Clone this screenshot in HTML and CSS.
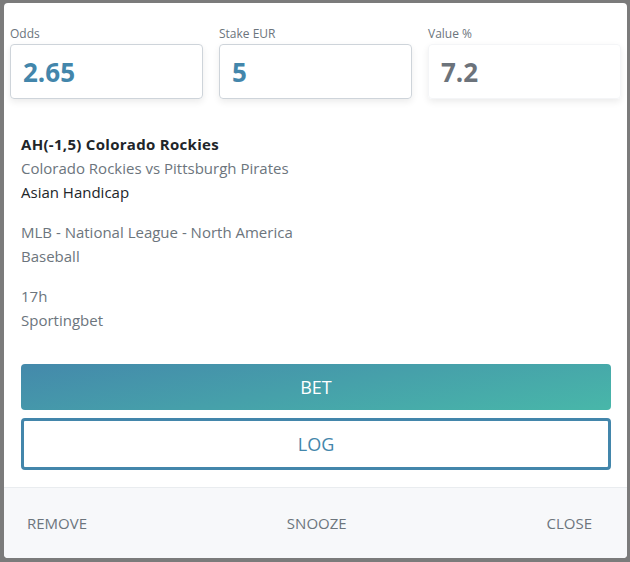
FILE: index.html
```html
<!DOCTYPE html>
<html lang="en">

<head>
    <meta charset="UTF-8">
    <meta name="viewport" content="width=device-width, initial-scale=1.0">
    <title>Value bet</title>
    <link rel="stylesheet" href="styles.css">
</head>

<body>
    <div id="dialog">
        <div id="fields">
            <div class="field">
                <label>Odds</label>
                <div class="box">2.65</div>
            </div>
            <div class="field">
                <label>Stake EUR</label>
                <div class="box">5</div>
            </div>
            <div class="field">
                <label>Value %</label>
                <div class="box readonly">7.2</div>
            </div>
        </div>

        <div id="info">
            <div class="group">
                <p class="title">AH(-1,5) Colorado Rockies</p>
                <p class="muted">Colorado Rockies vs Pittsburgh Pirates</p>
                <p>Asian Handicap</p>
            </div>
            <div class="group">
                <p class="muted">MLB - National League - North America</p>
                <p class="muted">Baseball</p>
            </div>
            <div class="group">
                <p class="muted">17h</p>
                <p class="muted">Sportingbet</p>
            </div>
        </div>

        <div id="actions">
            <button class="btn bet">BET</button>
            <button class="btn log">LOG</button>
        </div>

        <div id="footer">
            <span>REMOVE</span>
            <span>SNOOZE</span>
            <span>CLOSE</span>
        </div>
    </div>
</body>

</html>
```

FILE: styles.css
```css
* {
    padding: 0;
    margin: 0;
    box-sizing: border-box;
}

body {
    background: #7b7b7b;
    font-family: "Open Sans", "Noto Sans", sans-serif;
    color: #212529;
}

#dialog {
    width: 623px;
    height: 555px;
    margin: 3px 0 0 4px;
    background: #fff;
    border-radius: 4px;
    display: flex;
    flex-direction: column;
    overflow: hidden;
}

#fields {
    display: grid;
    grid-template-columns: repeat(3, 1fr);
    gap: 16px;
    padding: 23px 6px 0;
}

.field label {
    display: block;
    font-size: 12px;
    line-height: 16px;
    color: #6c757d;
    margin-bottom: 2px;
}

.field .box {
    height: 55px;
    border: 1px solid #ced4da;
    border-radius: 4px;
    box-shadow: 0 3px 7px rgba(0, 0, 0, 0.08);
    padding-left: 12px;
    font-size: 26px;
    font-weight: 700;
    line-height: 55px;
    color: #4386ab;
}

.field .readonly {
    border-color: #f4f5f7;
    color: #6c737b;
}

#info {
    padding: 33px 17px 0;
    font-size: 15px;
    line-height: 24px;
}

#info .group {
    margin-bottom: 16px;
}

#info .title {
    font-weight: 700;
    letter-spacing: 0.3px;
}

#info .muted {
    color: #6c757d;
}

#actions {
    padding: 16px 16px 0 17px;
    display: flex;
    flex-direction: column;
    gap: 8px;
}

.btn {
    font-family: inherit;
    font-size: 18px;
    border-radius: 4px;
    cursor: pointer;
}

.bet {
    height: 46px;
    border: none;
    color: #fff;
    background: linear-gradient(170deg, #4489ab 0%, #48b7a9 100%);
}

.log {
    height: 52px;
    border: 3px solid #4386ab;
    background: #fff;
    color: #4386ab;
}

#footer {
    margin-top: auto;
    height: 71px;
    border-top: 1px solid #e9ecef;
    background: #f7f8fa;
    display: flex;
    justify-content: space-between;
    align-items: center;
    padding: 0 35px 0 23px;
    font-size: 15px;
    color: #6c757d;
}
```
